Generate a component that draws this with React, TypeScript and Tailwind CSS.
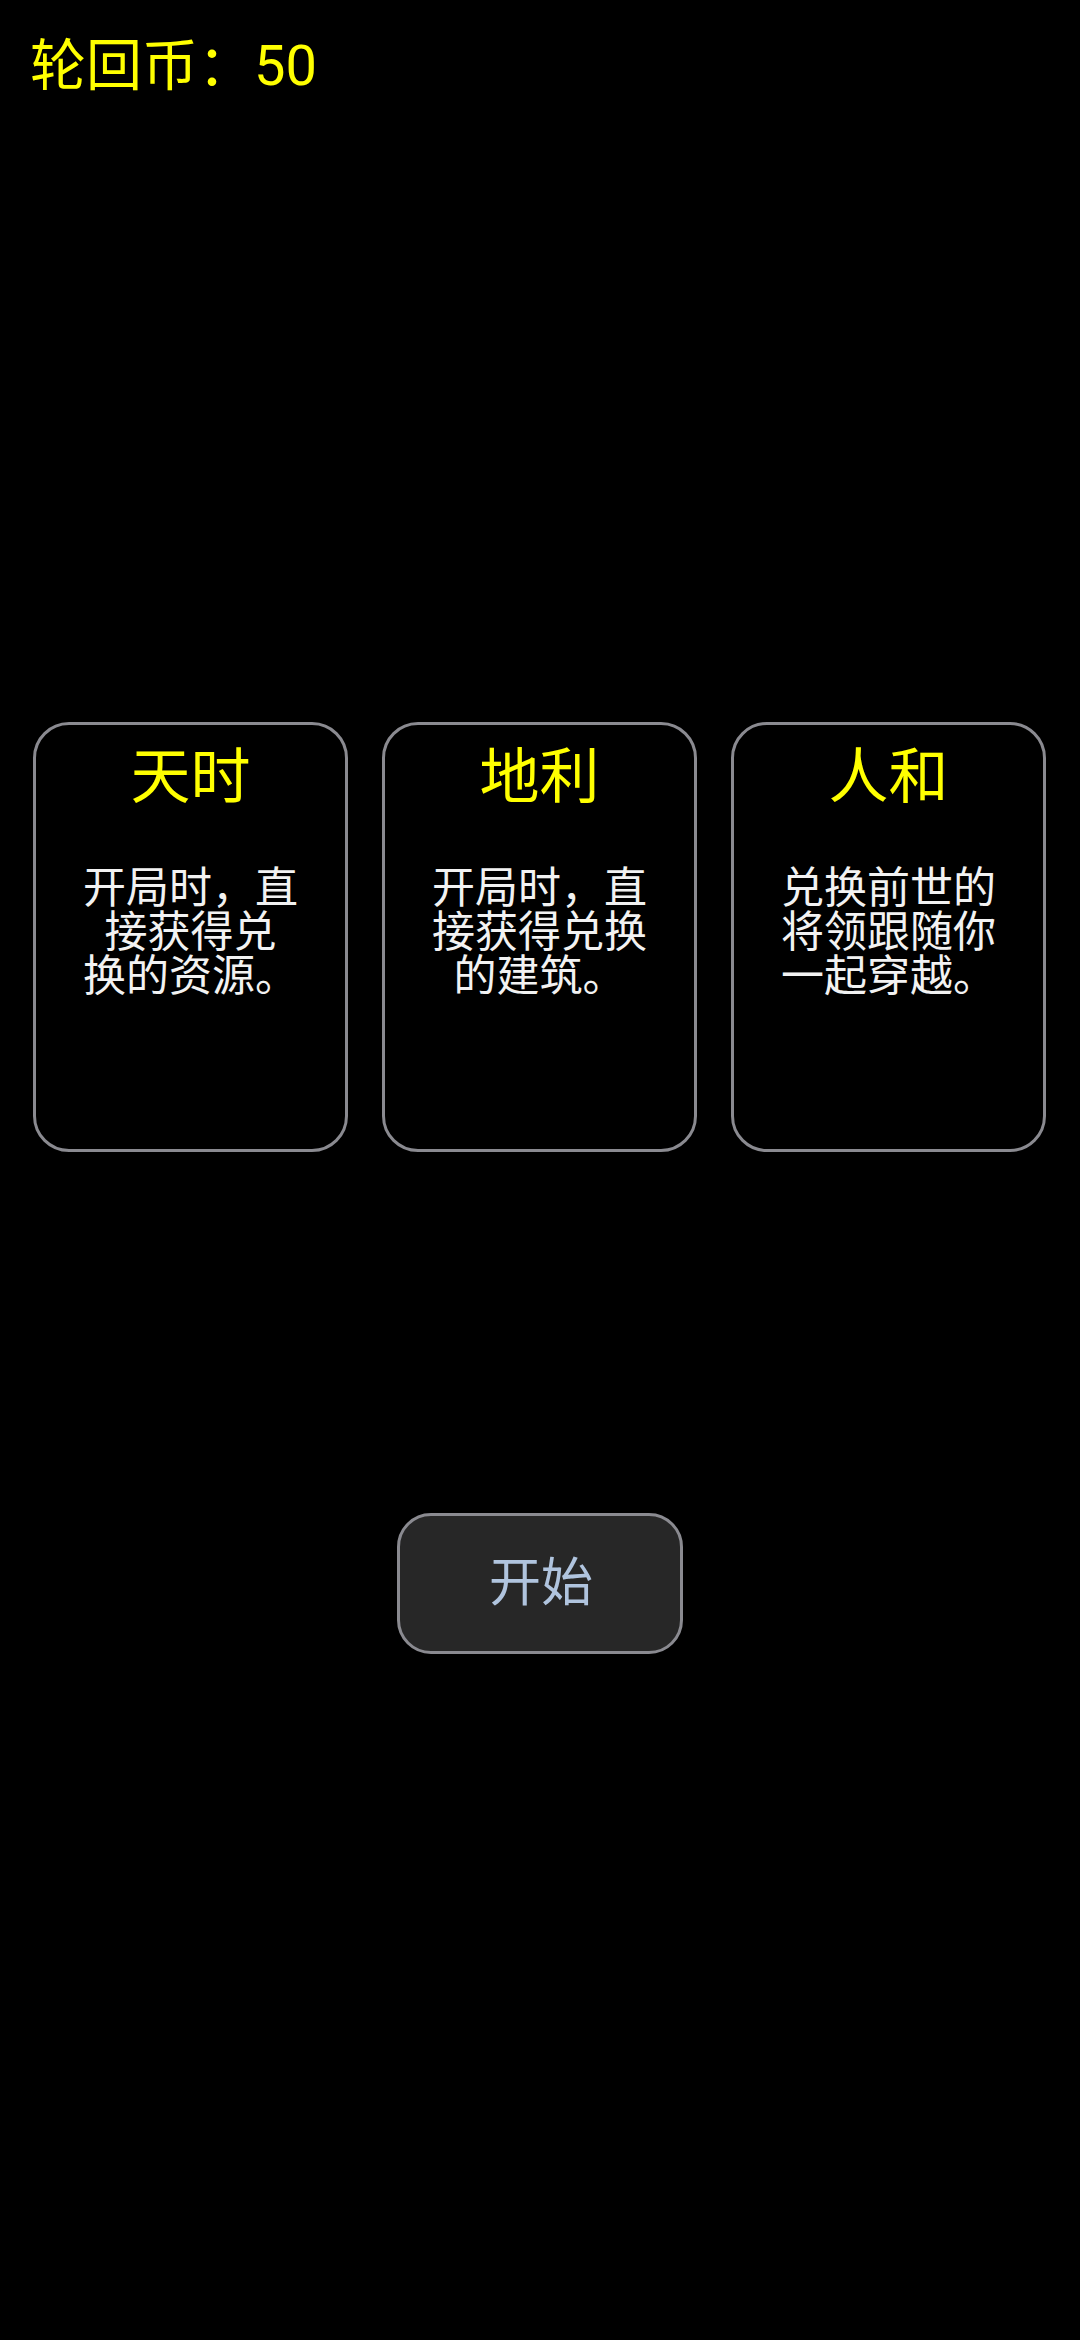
import React from "react";

const cards = [
  { title: "天时", lines: ["开局时，直", "接获得兑", "换的资源。"] },
  { title: "地利", lines: ["开局时，直", "接获得兑换", "的建筑。"] },
  { title: "人和", lines: ["兑换前世的", "将领跟随你", "一起穿越。"] },
];

export default function App() {
  return (
    <div
      className="w-[1080px] h-[2340px] bg-black flex flex-col"
      style={{ fontFamily: 'Roboto, "Noto Sans CJK SC", "Noto Sans", sans-serif' }}
    >
      <div className="pl-[30px] pt-[34px] h-[100px] text-[56px] leading-[64px] text-[#ffff00] whitespace-nowrap">
        轮回币：50
      </div>
      <div className="mt-[622px] px-[33px] flex gap-[34px]">
        {cards.map((c) => (
          <div
            key={c.title}
            className="w-[315px] h-[430px] rounded-[36px] border-[3px] border-[#8a8a90] bg-black flex flex-col items-center"
          >
            <div className="mt-[17px] text-[60px] leading-[72px] text-[#ffff00]">
              {c.title}
            </div>
            <div className="mt-[52px] text-center whitespace-nowrap text-[43px] leading-[44px] text-[#f2f2f2]">
              {c.lines.map((l, i) => (
                <React.Fragment key={l}>
                  {i > 0 && <br />}
                  {l}
                </React.Fragment>
              ))}
            </div>
          </div>
        ))}
      </div>
      <div className="mt-[361px] flex justify-center">
        <div className="w-[286px] h-[141px] rounded-[34px] border-[3px] border-[#8a8a90] bg-[#272727] flex items-center justify-center text-[52px] leading-none text-[#b0c4de] pl-[2px]">
          开始
        </div>
      </div>
    </div>
  );
}
